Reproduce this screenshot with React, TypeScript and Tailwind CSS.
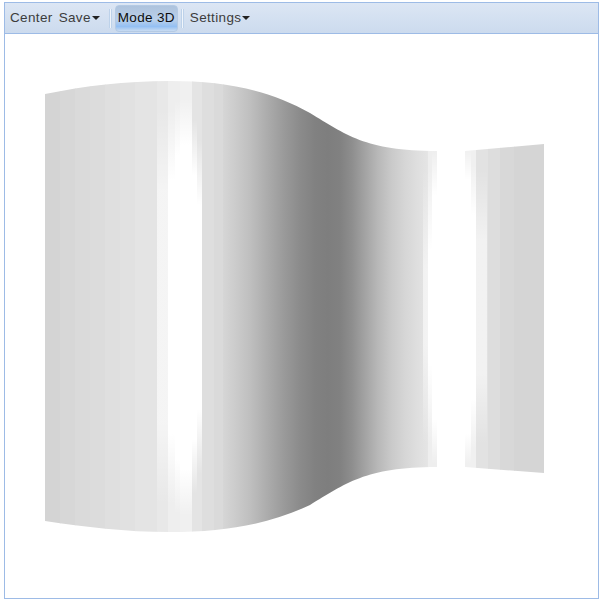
const bands: [number, number, string][] = [
  [45, 60, "#d4d4d4"], [60, 75, "#d7d7d7"], [75, 90, "#dadada"], [90, 105, "#dcdcdc"],
  [105, 120, "#dfdfdf"], [120, 135, "#e1e1e1"], [135, 157, "#e4e4e4"], [157, 168, "#e8e8e8"],
  [168, 180, "#eeeeee"], [180, 192, "#f0f0f0"], [192, 202, "#e4e4e4"], [202, 214, "#dedede"],
  [214, 223, "#dadada"],
];

// smooth part of the shading, x -> grey
const shade: [number, string][] = [
  [223, "#d6d6d6"], [235, "#cccccc"], [250, "#bfbfbf"], [270, "#a9a9a9"], [285, "#999999"],
  [300, "#8b8b8b"], [315, "#818181"], [328, "#7e7e7e"], [340, "#818181"], [352, "#8e8e8e"],
  [365, "#a3a3a3"], [378, "#b8b8b8"], [392, "#cacaca"], [405, "#d6d6d6"], [418, "#dfdfdf"],
  [428, "#e5e5e5"],
];

const rightBands: [number, number, string][] = [
  [465, 476, "#f0f0f0"], [476, 488, "#e2e2e2"], [488, 500, "#dddddd"],
  [500, 514, "#d8d8d8"], [514, 544, "#d5d5d5"],
];

// white glare: x range, fade from y0 to y1 (mirrored around the middle), peak opacity
const glare: { x0: number; x1: number; y0: number; y1: number; max: number }[] = [
  { x0: 157, x1: 168, y0: 110, y1: 190, max: 0.55 },
  { x0: 168, x1: 175, y0: 110, y1: 180, max: 1 },
  { x0: 175, x1: 180, y0: 100, y1: 155, max: 1 },
  { x0: 180, x1: 192, y0: 98, y1: 145, max: 1 },
  { x0: 192, x1: 197, y0: 120, y1: 175, max: 1 },
  { x0: 197, x1: 202, y0: 140, y1: 205, max: 1 },
  { x0: 423, x1: 428, y0: 170, y1: 270, max: 0.55 },
  { x0: 428, x1: 432, y0: 170, y1: 250, max: 1 },
  { x0: 432, x1: 437, y0: 150, y1: 195, max: 1 },
  { x0: 465, x1: 471, y0: 150, y1: 180, max: 1 },
  { x0: 471, x1: 476, y0: 165, y1: 215, max: 1 },
  { x0: 476, x1: 487, y0: 170, y1: 240, max: 0.55 },
];

const MID = 307;

function Chart() {
  return (
    <svg width="592" height="564" viewBox="5 34 592 564" className="block">
      <defs>
        <clipPath id="leftBody">
          <path d="M45 94 C85 86 125 81 170 81 C225 81 270 90 310 113 C345 134 365 151 437 151 L437 467 C365 467 345 484 310 505 C270 524 225 532 170 532 C125 532 85 527 45 521 Z" />
        </clipPath>
        <clipPath id="rightBody">
          <path d="M465 151 L544 144 L544 473 L465 467 Z" />
        </clipPath>
        <linearGradient id="shade" x1="223" y1="0" x2="428" y2="0" gradientUnits="userSpaceOnUse">
          {shade.map(([x, c]) => (
            <stop key={x} offset={(x - 223) / 205} stopColor={c} />
          ))}
        </linearGradient>
        {glare.map((g) => {
          const y2 = 2 * MID - g.y0;
          const span = y2 - g.y0;
          return (
            <linearGradient key={g.x0} id={`glare${g.x0}`} x1="0" y1={g.y0} x2="0" y2={y2} gradientUnits="userSpaceOnUse">
              <stop offset="0" stopColor="#fff" stopOpacity="0" />
              <stop offset={(g.y1 - g.y0) / span} stopColor="#fff" stopOpacity={g.max} />
              <stop offset={1 - (g.y1 - g.y0) / span} stopColor="#fff" stopOpacity={g.max} />
              <stop offset="1" stopColor="#fff" stopOpacity="0" />
            </linearGradient>
          );
        })}
      </defs>
      <g clipPath="url(#leftBody)">
        {bands.map(([a, b, c]) => (
          <rect key={a} x={a} y={70} width={b - a + 0.5} height={480} fill={c} />
        ))}
        <rect x={223} y={70} width={205.5} height={480} fill="url(#shade)" />
        <rect x={428} y={70} width={9} height={480} fill="#eeeeee" />
        {glare.filter((g) => g.x1 < 440).map((g) => (
          <rect key={g.x0} x={g.x0} y={70} width={g.x1 - g.x0} height={480} fill={`url(#glare${g.x0})`} />
        ))}
      </g>
      <g clipPath="url(#rightBody)">
        {rightBands.map(([a, b, c]) => (
          <rect key={a} x={a} y={140} width={b - a + 0.5} height={340} fill={c} />
        ))}
        {glare.filter((g) => g.x0 > 440).map((g) => (
          <rect key={g.x0} x={g.x0} y={140} width={g.x1 - g.x0} height={340} fill={`url(#glare${g.x0})`} />
        ))}
      </g>
    </svg>
  );
}

function Sep() {
  return <div className="mx-[3px] h-[19px] w-[3px] border-x border-x-[#bdd2ea] bg-[#f0f5fb]" />;
}

function Caret() {
  return <span className="ml-px inline-block border-x-[4px] border-t-[4px] border-x-transparent border-t-[#222]" />;
}

export default function App() {
  return (
    <div className="h-[602px] w-[604px] bg-white pl-1 pt-[2px] font-['Liberation_Sans',sans-serif] text-[13.5px]">
      <div className="h-[597px] w-[595px] border border-[#9dbbe6]">
        <div className="flex h-[31px] items-center border-b border-[#9dbbe6] bg-gradient-to-b from-[#dce6f4] to-[#ccdbee] pl-[5px] text-[#3c3c3c]">
          <span className="tracking-[0.35px]">Center</span>
          <span className="ml-[6px] flex items-center tracking-[0.35px]">Save<Caret /></span>
          <div className="ml-[6px]">
            <Sep />
          </div>
          <span className="flex h-[27px] w-[63px] items-center justify-center rounded-sm border border-[#b4cae4] bg-[linear-gradient(#aec3dd_0%,#bad0ea_55%,#94c0f3_82%,#c9dcf2_100%)] tracking-[0.35px] text-[#0c0c0c]">
            Mode 3D
          </span>
          <Sep />
          <span className="ml-[3px] flex items-center tracking-[0.35px]">Settings<Caret /></span>
        </div>
        <Chart />
      </div>
    </div>
  );
}
